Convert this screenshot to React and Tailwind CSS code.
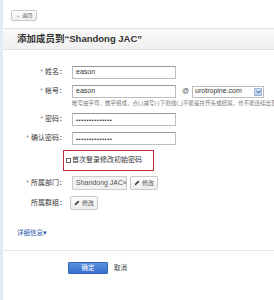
import React from 'react';

const font = 'font-["Liberation_Sans","Noto_Sans_CJK_SC",sans-serif]';

function Label({ children, req = true }) {
    return (
        <div className="w-[65px] shrink-0 text-right text-[7px] text-[#333] pr-[2px]">
            {req && <span className="text-[#888] mr-[2px]">*</span>}
            {children}：
        </div>
    );
}

function Input({ value, pw = false }) {
    return (
        <div className="ml-[4px] w-[104px] h-[13px] border border-[#bdbdbd] border-t-[#999] bg-white flex items-center pl-[3px] text-[7px] text-[#333] overflow-hidden">
            {pw ? <span className="text-[6px] font-bold tracking-[0.5px] leading-none">••••••••••••••</span> : value}
        </div>
    );
}

function EditButton() {
    return (
        <div className="h-[14px] px-[3px] border border-[#c8c8c8] rounded-[2px] bg-gradient-to-b from-white to-[#ececec] flex items-center gap-[2px] text-[6px] text-[#555]">
            <svg width="6" height="6" viewBox="0 0 10 10">
                <path d="M1 9 L2 6 L7 1 L9 3 L4 8 Z" fill="#444" />
            </svg>
            修改
        </div>
    );
}

export default function App() {
    return (
        <div className={`${font} w-[274px] h-[300px] bg-white border-l-[3px] border-[#e4ebf0] overflow-hidden`}>
            {/* back */}
            <div className="pt-[10px] pl-[8px]">
                <div className="w-[26px] h-[11px] border border-[#c8c8c8] rounded-[2px] bg-gradient-to-b from-white to-[#eeeeee] flex items-center justify-center text-[5px] text-[#555]">
                    ← 返回
                </div>
            </div>

            {/* header */}
            <div className="mt-[7px] h-[22px] bg-gradient-to-b from-[#fafafa] to-[#efefef] border-y border-[#e2e2e2] flex items-center pl-[14px] text-[9.5px] font-bold text-[#333]">
                添加成员到“Shandong JAC”
            </div>

            <div className="mt-[16px] flex items-center">
                <Label>姓名</Label>
                <Input value="eason" />
            </div>

            <div className="mt-[6px] flex items-center">
                <Label>帐号</Label>
                <Input value="eason" />
                <span className="ml-[6px] text-[7px] text-[#555]">@</span>
                <div className="ml-[3px] w-[72px] h-[12px] border border-[#bdbdbd] bg-white flex items-center justify-between pl-[2px] pr-[1px] text-[7px] text-[#333]">
                    urotropine.com
                    <div className="w-[8px] h-[8px] bg-gradient-to-b from-[#dfe9f7] to-[#b9cde9] border border-[#9fb6d6] flex items-center justify-center">
                        <svg width="5" height="4" viewBox="0 0 10 8">
                            <path d="M1 1 L5 6 L9 1" stroke="#2e5aa8" strokeWidth="2" fill="none" />
                        </svg>
                    </div>
                </div>
            </div>

            <div className="mt-[2px] ml-[69px] h-[7px] overflow-hidden whitespace-nowrap text-[5.5px] leading-[7px] text-[#777]">
                帐号由字母、数字组成，点(.)减号(-)下划线(_)不能是在开头或结尾，也不能连续出现
            </div>

            <div className="mt-[6px] flex items-center">
                <Label>密码</Label>
                <Input pw />
            </div>

            <div className="mt-[6px] flex items-center">
                <Label>确认密码</Label>
                <Input pw />
            </div>

            <div className="mt-[5px] ml-[60px] w-[91px] h-[21px] border-[1.5px] border-[#c0333a] flex items-center pl-[2px] gap-[1px] text-[7px] text-[#333]">
                <div className="w-[5px] h-[5px] border border-[#666] bg-white" />
                首次登录修改初始密码
            </div>

            <div className="mt-[5px] flex items-center">
                <Label>所属部门</Label>
                <div className="ml-[4px] w-[55px] h-[14px] border border-[#ccc] bg-[#f1f1f1] flex items-center pl-[3px] text-[7px] text-[#555] overflow-hidden whitespace-nowrap">
                    Shandong JAC×
                </div>
                <div className="ml-[3px]">
                    <EditButton />
                </div>
            </div>

            <div className="mt-[6px] flex items-center">
                <Label req={false}>所属群组</Label>
                <div className="ml-[2px]">
                    <EditButton />
                </div>
            </div>

            <div className="mt-[18px] pl-[14px] h-[9px] text-[6.5px] leading-[9px] text-[#2c5aa8]">
                详细信息▾
            </div>

            <div className="mt-[13px] border-t border-[#e6e6e6]" />

            <div className="mt-[11px] flex items-center pl-[65px]">
                <div className="w-[40px] h-[12px] bg-gradient-to-b from-[#5a8fe0] to-[#3a6fcf] border border-[#3565b8] rounded-[1px] flex items-center justify-center text-[6.5px] text-white">
                    确定
                </div>
                <span className="ml-[6px] text-[6.5px] text-[#444]">取消</span>
            </div>
        </div>
    );
}
